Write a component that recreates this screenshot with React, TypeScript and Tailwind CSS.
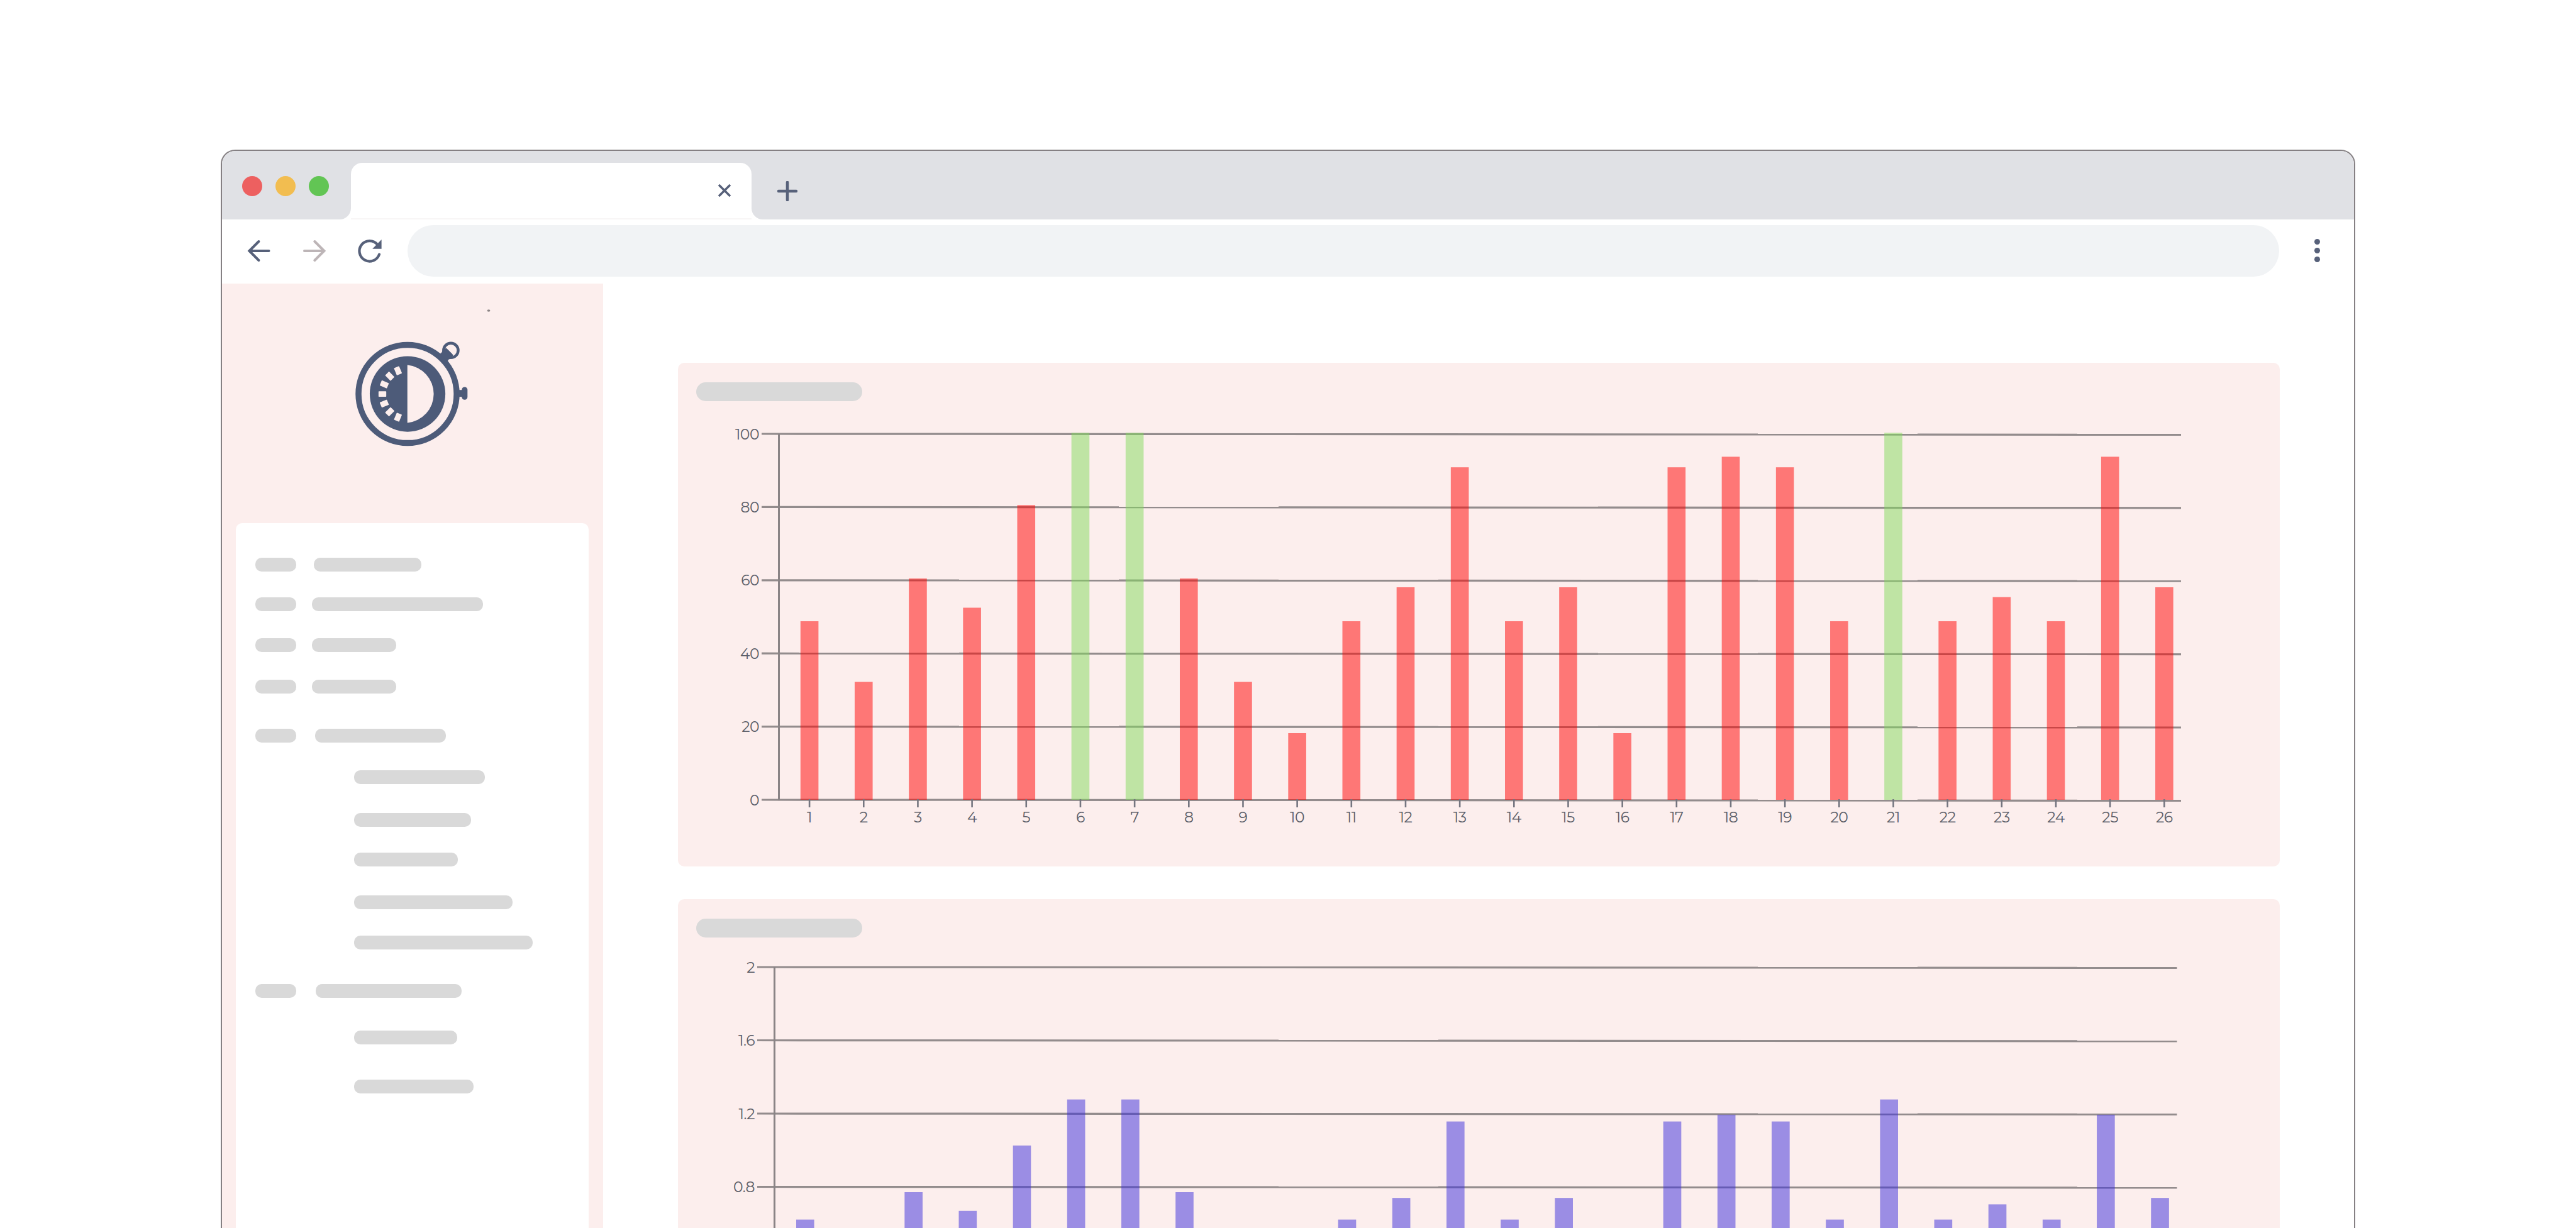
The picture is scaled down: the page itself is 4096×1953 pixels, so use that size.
import React from 'react';

type Row = { y: number; x: number; w: number; badge?: boolean };

/* Sidebar entries: vertical centre, left edge and width of each placeholder */
const ROWS: Row[] = [
  { y: 897.8, x: 499, w: 170.5, badge: true },
  { y: 961, x: 495.5, w: 272, badge: true },
  { y: 1026.3, x: 495.5, w: 134, badge: true },
  { y: 1092, x: 495.5, w: 134, badge: true },
  { y: 1169.7, x: 500.5, w: 208, badge: true },
  { y: 1235.4, x: 563, w: 207.5 },
  { y: 1303.7, x: 563, w: 185.5 },
  { y: 1366.9, x: 563, w: 165 },
  { y: 1435, x: 563, w: 251.5 },
  { y: 1498.8, x: 563, w: 283.5 },
  { y: 1576.3, x: 502, w: 232, badge: true },
  { y: 1649.9, x: 563, w: 164 },
  { y: 1727.7, x: 563, w: 190 },
];

const RED = '#ff0000';
const GREEN = '#82da5b';
const VIOLET = '#3a2cdb';

const FIRST_TOPS = [
  988, 1084.5, 920, 966.5, 803.3, 688.3, 688.3, 920, 1084.5, 1166, 988, 934, 743.2, 988,
  934, 1166, 743.2, 726.4, 743.2, 988, 688.3, 988, 949.6, 988, 726.4, 934,
];
const SECOND_TOPS = [
  1939.6, 2060, 1896, 1925.8, 1821.8, 1748.6, 1748.6, 1896, 2060, 2060, 1939.6, 1905.2,
  1783.6, 1939.6, 1905.2, 2060, 1783.6, 1772.8, 1783.6, 1939.6, 1748.6, 1939.6, 1915.4, 1939.6,
  1772.8, 1905.2,
];

type ChartProps = {
  viewTop: number;
  height: number;
  lineStart: number;
  lineEnd: number;
  axisX: number;
  lines: { y: number; label: string }[];
  bottom: number;
  firstBar: number;
  tops: number[];
  color: (i: number) => string;
  ticks?: boolean;
};

function Chart(p: ChartProps) {
  return (
    <svg
      className="block shrink-0"
      width={2547}
      height={p.height}
      viewBox={`1078 ${p.viewTop} 2547 ${p.height}`}
      fontFamily='Montserrat, Lato, "Open Sans", sans-serif'
      fontSize={23.5}
      fill="#5c5f69"
    >
      {p.lines.map((l) => (
        <g key={l.label}>
          <line x1={p.lineStart} x2={p.lineEnd} y1={l.y} y2={l.y + 1.4} stroke="#938c8d" strokeWidth={3.2} />
          <text x={p.lineStart - 4} y={l.y + 8.6} textAnchor="end" letterSpacing={-0.5}>
            {l.label}
          </text>
        </g>
      ))}
      <line x1={p.axisX} x2={p.axisX} y1={p.lines[0].y} y2={p.bottom + 1} stroke="#8a8486" strokeWidth={3} />
      {p.tops.map((top, i) => {
        const cx = p.firstBar + i * 86.17;
        return (
          <g key={i}>
            <rect x={cx - 14.3} y={top} width={28.6} height={p.bottom - top} fill={p.color(i)} fillOpacity={0.5} />
            {p.ticks && (
              <>
                <line x1={cx} x2={cx} y1={p.bottom - 1} y2={p.bottom + 12} stroke="#757680" strokeWidth={2.6} />
                <text x={cx} y={1307.8} textAnchor="middle" letterSpacing={-0.5}>
                  {i + 1}
                </text>
              </>
            )}
          </g>
        );
      })}
    </svg>
  );
}

function Logo() {
  const marks = [0, 22.5, 45, 67.5, -22.5, -45, -67.5];
  return (
    <svg className="block shrink-0" width={266.2} height={266.2} viewBox="0 0 1320 1320">
      <ellipse cx={1215} cy={109} rx={12} ry={9} fill="#8d8687" />
      <g fill="#4d5b79">
        <circle cx={575.5} cy={766.5} r={387} fill="none" stroke="#4d5b79" strokeWidth={47} />
        <circle cx={575.5} cy={766.5} r={298} />
        <circle cx={917} cy={423} r={57.5} fill="none" stroke="#4d5b79" strokeWidth={22} />
        <rect x={375} y={-37} width={97} height={74} rx={9} transform="translate(575.5 766.5) rotate(-45.5)" />
        <path d="M826 449Q845 449 850 425L880 404L936 460L915 490Q892 492 893 512Z" />
        <rect x={968} y={735} width={50} height={54} />
        <rect x={1003} y={711} width={45} height={101} rx={22} />
      </g>
      <path d="M574 538A229 229 0 0 1 574 994Z" fill="#fceeed" />
      {marks.map((a) => (
        <rect
          key={a}
          x={-229}
          y={-22}
          width={61}
          height={44}
          rx={4}
          fill="#fceeed"
          transform={`translate(575.5 766.5) rotate(${a})`}
        />
      ))}
    </svg>
  );
}

function TabStrip() {
  return (
    <div className="flex h-[109px] items-end bg-[#e0e1e5]">
      <div className="flex h-full w-[187px] shrink-0 items-start gap-[21px] pl-[32px] pt-[40px]">
        <span className="size-[32px] rounded-full bg-[#ed6060]" />
        <span className="size-[32px] rounded-full bg-[#f2bd50]" />
        <span className="size-[32px] rounded-full bg-[#62c554]" />
      </div>
      <svg className="block shrink-0" width={18} height={18} viewBox="0 0 18 18">
        <path d="M18 0V18H0A18 18 0 0 0 18 0Z" fill="#ffffff" />
      </svg>
      <div className="flex h-[90px] w-[637px] shrink-0 items-center justify-end rounded-t-[18px] border-b-2 border-[#f8f6f6] bg-white pr-[32px]">
        <svg className="block" width={22} height={22} viewBox="0 0 22 22">
          <path d="M2 2L20 20M20 2L2 20" stroke="#57617a" strokeWidth={3.5} fill="none" />
        </svg>
      </div>
      <svg className="block shrink-0" width={18} height={18} viewBox="0 0 18 18">
        <path d="M0 0V18H18A18 18 0 0 1 0 0Z" fill="#ffffff" />
      </svg>
      <svg className="mb-[29px] ml-[23px] block shrink-0" width={32} height={32} viewBox="0 0 32 32">
        <path d="M16 2V30M2 16H30" stroke="#57617a" strokeWidth={4.6} strokeLinecap="round" fill="none" />
      </svg>
    </div>
  );
}

function Toolbar() {
  return (
    <div className="flex h-[102px] items-center bg-white pb-[3px]">
      <svg className="ml-[40px] block shrink-0" width={38} height={38} viewBox="0 0 38 38">
        <path d="M34.5 19H4M18.4 4L3.4 19L18.4 34" stroke="#57617a" strokeWidth={4} strokeLinecap="round" fill="none" />
      </svg>
      <svg className="ml-[50px] block shrink-0" width={38} height={38} viewBox="0 0 38 38">
        <path d="M3 19H34M19.4 4L34.4 19L19.4 34" stroke="#bdb5b7" strokeWidth={4} strokeLinecap="round" fill="none" />
      </svg>
      <svg className="ml-[50px] block shrink-0" width={40} height={40} viewBox="0 0 40 40">
        <path d="M34 25.6A16.2 16.2 0 1 1 31.2 10" stroke="#57617a" strokeWidth={4.2} strokeLinecap="round" fill="none" />
        <path d="M37.6 2V16.8H23.2Z" fill="#57617a" />
      </svg>
      <div className="ml-[39px] h-[82px] w-[2976px] shrink-0 rounded-full bg-[#f1f3f5]" />
      <div className="ml-[56px] flex flex-col gap-[4.8px]">
        <span className="size-[9px] rounded-full bg-[#57617a]" />
        <span className="size-[9px] rounded-full bg-[#57617a]" />
        <span className="size-[9px] rounded-full bg-[#57617a]" />
      </div>
    </div>
  );
}

function Sidebar() {
  return (
    <div className="flex w-[606px] shrink-0 flex-col bg-[#fceeed]">
      <div className="flex h-[381px] shrink-0 pl-[179px] pt-[21px]">
        <Logo />
      </div>
      <div className="ml-[22px] flex w-[561px] grow flex-col rounded-t-[10px] bg-white">
        {ROWS.map((r, i) => {
          const prev = i === 0 ? 831.8 : ROWS[i - 1].y + 11;
          return (
            <div key={i} className="flex h-[22px] shrink-0 pl-[31px]" style={{ marginTop: r.y - 11 - prev }}>
              {r.badge && <span className="h-[22px] w-[65px] shrink-0 rounded-[10px] bg-[#d9d9d9]" />}
              <span
                className="h-[22px] shrink-0 rounded-[10px] bg-[#d9d9d9]"
                style={{ marginLeft: r.x - (r.badge ? 471 : 406), width: r.w }}
              />
            </div>
          );
        })}
      </div>
    </div>
  );
}

export default function App() {
  return (
    <div className="flex h-[1953px] w-[4096px] overflow-hidden bg-white pl-[351px] pt-[238px]">
      <div className="flex h-[1800px] w-[3394px] shrink-0 flex-col overflow-hidden rounded-t-[23px] border-2 border-[#858083] bg-white">
        <TabStrip />
        <Toolbar />
        <div className="flex grow">
          <Sidebar />
          <div className="flex grow flex-col pl-[119px] pt-[126px]">
            <div className="flex h-[801px] w-[2547px] shrink-0 flex-col overflow-hidden rounded-[10px] bg-[#fceeed]">
              <div className="ml-[29px] mt-[31px] h-[30px] w-[264px] shrink-0 rounded-full bg-[#d9d9d9]" />
              <Chart
                viewTop={638}
                height={740}
                lineStart={1211}
                lineEnd={3468}
                axisX={1238.5}
                bottom={1272}
                firstBar={1287.1}
                tops={FIRST_TOPS}
                color={(i) => (i === 5 || i === 6 || i === 20 ? GREEN : RED)}
                ticks
                lines={[
                  { y: 690, label: '100' },
                  { y: 806.4, label: '80' },
                  { y: 922.8, label: '60' },
                  { y: 1039.2, label: '40' },
                  { y: 1155.6, label: '20' },
                  { y: 1272, label: '0' },
                ]}
              />
            </div>
            <div className="mt-[52px] flex h-[600px] w-[2547px] shrink-0 flex-col overflow-hidden rounded-[10px] bg-[#fceeed]">
              <div className="ml-[29px] mt-[31px] h-[30px] w-[264px] shrink-0 rounded-full bg-[#d9d9d9]" />
              <Chart
                viewTop={1491}
                height={538}
                lineStart={1204}
                lineEnd={3461.5}
                axisX={1231.5}
                bottom={2120}
                firstBar={1280.3}
                tops={SECOND_TOPS}
                color={() => VIOLET}
                lines={[
                  { y: 1538, label: '2' },
                  { y: 1654.5, label: '1.6' },
                  { y: 1771, label: '1.2' },
                  { y: 1887.5, label: '0.8' },
                ]}
              />
            </div>
          </div>
        </div>
      </div>
    </div>
  );
}
